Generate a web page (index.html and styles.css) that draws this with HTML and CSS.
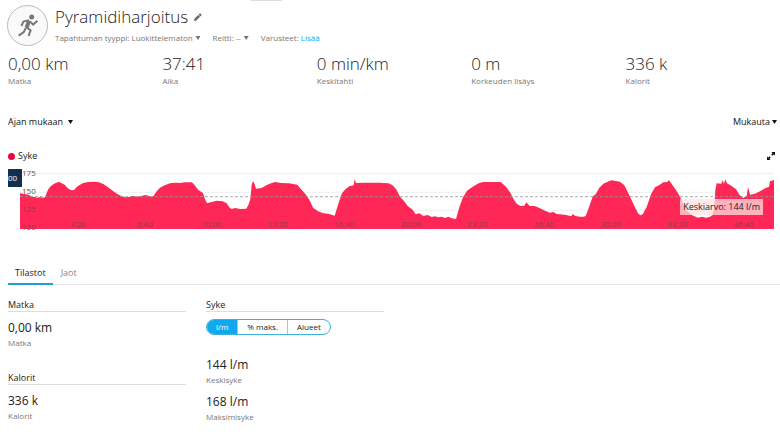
FILE: index.html
```html
<!DOCTYPE html>
<html lang="fi">
<head>
    <meta charset="UTF-8">
    <title>Pyramidiharjoitus</title>
    <link rel="stylesheet" href="styles.css">
</head>
<body>

<div class="page_edge"></div>

<header class="activity_header">
    <div class="activity_icon">
        <svg viewBox="0 0 24 24" aria-hidden="true">
            <circle cx="15.7" cy="3" r="2.5"/>
            <path d="M13 6.3 L7.4 7.6 L5.4 12 M14 7.4 L17.2 10.6 L21.4 6.8 M10.4 13 L14.6 16.4 L12.6 22 M9.8 14 L7.6 18.4 L2.6 21.6"/>
            <path class="torso" d="M13.2 6.6 L10.6 13.6"/>
        </svg>
    </div>
    <div>
        <h1 class="title">Pyramidiharjoitus
            <button class="edit_btn" aria-label="Muokkaa nimeä">
                <svg viewBox="0 0 10 10" aria-hidden="true"><path d="M1 9 L1.6 6.4 L5.8 2.2 L7.8 4.2 L3.6 8.4 Z M6.2 1.8 L7.4 .7 Q8 .3 8.6 .9 L9.2 1.5 Q9.7 2 9.2 2.6 L8.2 3.8 Z"/></svg>
            </button>
        </h1>
        <div class="meta">
            <div class="meta_item">
                <label for="type">Tapahtuman tyyppi:</label>
                <span class="dropdown"><select id="type"><option>Luokittelematon</option></select></span>
            </div>
            <div class="meta_item">
                <label for="course">Reitti:</label>
                <span class="dropdown"><select id="course"><option>--</option></select></span>
            </div>
            <div class="meta_item">Varusteet: <a href="#">Lisää</a></div>
        </div>
    </div>
</header>

<main>
    <section class="summary">
        <div><p class="big">0,00 km</p><p class="caption">Matka</p></div>
        <div><p class="big">37:41</p><p class="caption">Aika</p></div>
        <div><p class="big">0 min/km</p><p class="caption">Keskitahti</p></div>
        <div><p class="big">0 m</p><p class="caption">Korkeuden lisäys</p></div>
        <div><p class="big">336 k</p><p class="caption">Kalorit</p></div>
    </section>

    <div class="toolbar">
        <span class="dropdown"><select aria-label="Akseli"><option>Ajan mukaan</option></select></span>
        <button class="dropdown customize">Mukauta</button>
    </div>

    <div class="legend">
        <span class="dot"></span>
        <span>Syke</span>
        <button class="expand_btn" aria-label="Suurenna">
            <svg viewBox="0 0 9 9" aria-hidden="true"><path d="M5 0 H9 V4 L7.6 2.8 L6 4.2 L4.8 3 L6.2 1.4 Z M4 9 H0 V5 L1.4 6.2 L3 4.8 L4.2 6 L2.8 7.6 Z"/></svg>
        </button>
    </div>

    <!-- heart rate chart -->
    <div class="chart">
        <svg class="plot" viewBox="0 0 2262 168" preserveAspectRatio="none" aria-hidden="true">
            <path class="grid" d="M0 2 H2262 M0 58 H2262 M0 112 H2262"/>
            <path class="area" d="M0 168 L0 61 L15 63 L28 66 L36 71 L45 72 L52 74 L60 72 L68 74 L75 73 L80 60 L84 50
                L92 40 L101 33 L112 28 L118 27 L125 31 L134 35 L142 44 L150 50 L157 52 L163 50 L170 42 L180 35 L190 30 L205 27
                L222 26 L237 28 L250 33 L262 41 L272 49 L282 56 L296 65 L306 70 L315 73 L327 72 L336 68 L350 71 L363 69
                L376 66 L386 68 L393 72 L400 70 L410 55 L420 44 L434 37 L450 31 L466 29 L480 30 L495 28 L516 28 L524 37
                L535 51 L549 60 L554 76 L561 91 L572 88 L590 83 L608 85 L620 91 L629 104 L635 108 L646 105 L660 108
                L679 107 L686 94 L691 78 L695 35 L699 24 L704 34 L708 47 L725 45 L739 37 L753 31 L765 27 L783 30 L807 31
                L832 35 L842 47 L858 65 L870 84 L879 104 L894 115 L910 121 L925 122 L944 128 L950 109 L957 86 L966 61
                L976 49 L988 40 L1001 37 L1004 19 L1008 30 L1038 29 L1078 29 L1105 31 L1117 36 L1128 48 L1140 71
                L1152 84 L1163 99 L1178 110 L1187 124 L1198 121 L1210 129 L1223 126 L1235 132 L1245 130 L1255 133
                L1265 131 L1275 135 L1285 131 L1295 136 L1308 138 L1318 103 L1328 75 L1341 53 L1357 42 L1376 31
                L1390 27 L1442 27 L1458 41 L1472 61 L1480 77 L1490 92 L1501 99 L1513 98 L1519 88 L1529 99 L1544 99
                L1560 106 L1575 113 L1590 119 L1600 117 L1610 123 L1620 124 L1638 126 L1654 130 L1658 123 L1666 129
                L1680 131 L1691 131 L1697 129 L1707 103 L1718 71 L1728 62 L1738 44 L1750 32 L1766 25 L1775 22 L1800 26
                L1813 37 L1828 67 L1842 97 L1854 121 L1861 127 L1868 124 L1880 102 L1893 64 L1905 43 L1917 37 L1930 28
                L1942 27 L1947 21 L1953 30 L1962 43 L1972 57 L1983 77 L1998 111 L2015 126 L2034 134 L2046 131 L2058 134
                L2070 131 L2078 126 L2083 99 L2086 51 L2090 31 L2104 32 L2108 21 L2112 32 L2116 19 L2121 31 L2134 38
                L2148 49 L2158 65 L2169 75 L2180 69 L2184 41 L2190 65 L2205 62 L2220 55 L2235 46 L2247 41 L2250 25
                L2262 21 L2262 168 Z"/>
            <path class="average" d="M0 71 H2262"/>
        </svg>
        <ul class="y_axis">
            <li>175</li>
            <li>150</li>
            <li>125</li>
            <li>100</li>
        </ul>
        <ul class="x_axis">
            <li>3:20</li>
            <li>6:40</li>
            <li>10:00</li>
            <li>13:20</li>
            <li>16:40</li>
            <li>20:00</li>
            <li>23:20</li>
            <li>26:40</li>
            <li>30:00</li>
            <li>33:20</li>
            <li>36:40</li>
        </ul>
        <span class="time_flag">00</span>
        <span class="average_label">Keskiarvo: 144 l/m</span>
    </div>

    <div class="tabs" role="tablist">
        <button class="tab active" role="tab" aria-selected="true">Tilastot</button>
        <button class="tab" role="tab" aria-selected="false">Jaot</button>
    </div>

    <div class="panels">
        <div>
            <section class="panel">
                <h2>Matka</h2>
                <p class="value">0,00 km</p>
                <p class="caption">Matka</p>
            </section>
            <section class="panel">
                <h2>Kalorit</h2>
                <p class="value">336 k</p>
                <p class="caption">Kalorit</p>
            </section>
        </div>
        <section class="panel">
            <h2>Syke</h2>
            <div class="units">
                <input type="radio" name="unit" id="bpm" checked><label for="bpm">l/m</label>
                <input type="radio" name="unit" id="max"><label for="max">% maks.</label>
                <input type="radio" name="unit" id="zones"><label for="zones">Alueet</label>
            </div>
            <p class="value">144 l/m</p>
            <p class="caption">Keskisyke</p>
            <p class="value">168 l/m</p>
            <p class="caption">Maksimisyke</p>
        </section>
    </div>
</main>

</body>
</html>
```
FILE: styles.css
```css
*{
    margin: 0;
    padding: 0;
    box-sizing: border-box;
}
body{
    background: #fff;
    color: #222;
    font-family: "Open Sans", "Noto Sans", sans-serif;
    font-size: 9px;
}
button, select{
    border: none;
    background: none;
    color: inherit;
    font: inherit;
    appearance: none;
    cursor: pointer;
}
ul{
    list-style: none;
}
a{
    color: #11a9ed;
    text-decoration: none;
}
main{
    padding-left: 8px;
}

.page_edge{
    width: 31px;
    height: 1px;
    margin-left: 251px;
    background: #ddd;
}

/* header */
.activity_header{
    display: flex;
    gap: 7px;
    padding: 4px 7px 7px;
}
.activity_icon{
    display: flex;
    align-items: center;
    justify-content: center;
    width: 41px;
    height: 41px;
    border: 1px solid #bbb;
    border-radius: 50%;
    background: #fafafa;
}
.activity_icon svg{
    width: 24px;
    height: 24px;
    fill: none;
    stroke: #777;
    stroke-width: 2;
}
.activity_icon circle{
    fill: #777;
    stroke: none;
}
.activity_icon .torso{
    stroke-width: 4;
}
.title{
    display: flex;
    align-items: center;
    gap: 5px;
    margin-bottom: 1px;
    font-size: 17px;
    font-weight: 300;
    line-height: 24px;
}
.edit_btn svg{
    display: block;
    width: 9px;
    height: 9px;
    fill: #666;
}
.meta{
    display: flex;
    gap: 12px;
    color: #777;
    font-size: 8px;
    line-height: 16px;
}
.meta_item{
    display: flex;
    gap: 2px;
}

.dropdown{
    display: inline-flex;
    align-items: center;
    gap: 2px;
}
.dropdown::after{
    content: "";
    width: 5px;
    height: 4px;
    background: currentColor;
    clip-path: polygon(0 0, 100% 0, 50% 100%);
}

/* summary row */
.summary{
    display: grid;
    grid-template-columns: repeat(5, 1fr);
}
.big{
    font-size: 17px;
    font-weight: 300;
    line-height: 22px;
}
.caption{
    color: #777;
    font-size: 8px;
    line-height: 12px;
}

.toolbar{
    display: flex;
    justify-content: space-between;
    margin-top: 27px;
    padding-right: 3px;
    color: #111;
    line-height: 16px;
}
.toolbar span.dropdown{
    gap: 5px;
}

.legend{
    display: flex;
    align-items: center;
    gap: 3px;
    margin-top: 18px;
    padding-right: 5px;
    line-height: 16px;
}
.dot{
    width: 7px;
    height: 7px;
    border-radius: 50%;
    background: #e8083e;
}
.expand_btn{
    margin-left: auto;
}
.expand_btn svg{
    display: block;
    width: 8px;
    height: 8px;
    fill: #111;
}

/* chart */
.chart{
    position: relative;
    height: 56px;
    margin: 9px 6px 0 12px;
    font-size: 8px;
}
.plot{
    display: block;
    width: 100%;
    height: 100%;
}
.area{
    fill: #ff2755;
}
.grid, .average{
    fill: none;
    stroke: #eee;
    stroke-width: 1;
    vector-effect: non-scaling-stroke;
}
.average{
    stroke: #999;
    stroke-opacity: .8;
    stroke-dasharray: 3 2;
}
.y_axis{
    position: absolute;
    top: -9px;
    left: 2px;
    color: #555;
    line-height: 18px;
}
.y_axis li:nth-child(n+3){
    color: #943a4c;
}
.x_axis{
    position: absolute;
    right: -3px;
    bottom: 0;
    left: 25px;
    display: grid;
    grid-template-columns: repeat(11, 1fr);
    color: #943a4c;
    line-height: 10px;
    text-align: center;
}
.time_flag{
    position: absolute;
    top: -4px;
    left: -12px;
    width: 14px;
    height: 18px;
    overflow: hidden;
    background: #12304d;
    color: #fff;
    line-height: 17px;
}
.average_label{
    position: absolute;
    right: 11px;
    bottom: 14px;
    padding: 0 3px;
    background: rgba(255, 225, 225, .75);
    color: #222;
    font-size: 9px;
    line-height: 16px;
}

/* tabs */
.tabs{
    display: flex;
    gap: 1px;
    margin-top: 36px;
    border-bottom: 1px solid #e5e5e5;
    line-height: 16px;
}
.tab{
    margin-bottom: -1px;
    padding: 0 7px 2px;
    border-bottom: 2px solid transparent;
    color: #888;
}
.tab.active{
    border-color: #1b9fd6;
    color: #222;
}

/* statistics */
.panels{
    display: grid;
    grid-template-columns: repeat(4, 1fr);
    gap: 20px;
    padding-top: 14px;
}
.panel + .panel{
    margin-top: 24px;
}
.panel h2{
    border-bottom: 1px solid #ddd;
    font-size: 9px;
    font-weight: 400;
    line-height: 12px;
}
.value{
    margin-top: 7px;
    font-size: 12px;
    line-height: 18px;
}
.value + .caption{
    line-height: 11px;
}
.caption + .value{
    margin-top: 8px;
}
.units{
    display: inline-flex;
    margin: 7px 0;
    overflow: hidden;
    border: 1px solid #3eb0dc;
    border-radius: 8px;
    font-size: 8px;
    line-height: 14px;
}
.units + .value{
    margin-top: 14px;
}
.units input{
    position: absolute;
    opacity: 0;
}
.units label{
    padding: 0 9px;
}
.units label + input + label{
    border-left: 1px solid #8cd0ea;
}
.units input:checked + label{
    background: #11a9ed;
    color: #fff;
}
```
